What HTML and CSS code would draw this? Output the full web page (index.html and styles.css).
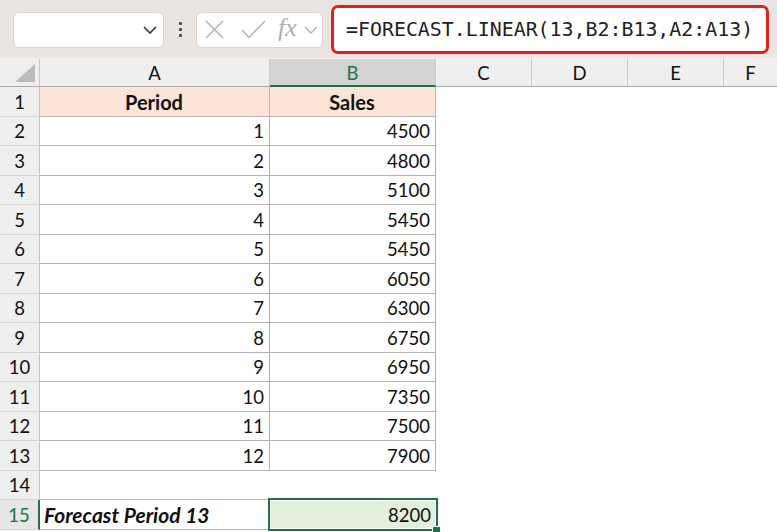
FILE: index.html
```html
<!DOCTYPE html>
<html>
<head>
<meta charset="utf-8">
<link rel="stylesheet" href="styles.css">
</head>
<body>
<div class="topbar">
  <div class="namebox">
    <svg class="nb-chev" width="14" height="8" viewBox="0 0 14 8"><path d="M1 1 L7 7 L13 1" fill="none" stroke="#333" stroke-width="1.6"/></svg>
  </div>
  <div class="dots"><span></span><span></span><span></span></div>
  <div class="iconbox">
    <svg width="19" height="19" viewBox="0 0 19 19"><path d="M1 1 L18 18 M18 1 L1 18" stroke="#b3b3b3" stroke-width="1.5" fill="none"/></svg>
    <svg width="25" height="19" viewBox="0 0 25 19"><path d="M1 10 L8 17.5 L24 1" stroke="#b3b3b3" stroke-width="1.5" fill="none"/></svg>
    <span class="fx">fx</span>
    <svg width="14" height="8" viewBox="0 0 14 8"><path d="M1 1 L7 7 L13 1" fill="none" stroke="#b3b3b3" stroke-width="1.4"/></svg>
  </div>
  <div class="formula">=FORECAST.LINEAR(13,B2:B13,A2:A13)</div>
</div>
<div class="sheet">
  <div class="corner"><svg width="20" height="18" viewBox="0 0 20 18"><path d="M20 0 L20 18 L0 18 Z" fill="#bcbcbc"/></svg></div>
  <div class="ch">A</div><div class="ch sel">B</div><div class="ch">C</div><div class="ch">D</div><div class="ch">E</div><div class="ch last">F</div>

  <div class="rh">1</div><div class="c b hd">Period</div><div class="c b hd">Sales</div><div class="c"></div><div class="c"></div><div class="c"></div><div class="c"></div>
  <div class="rh">2</div><div class="c b num">1</div><div class="c b num">4500</div><div class="c"></div><div class="c"></div><div class="c"></div><div class="c"></div>
  <div class="rh">3</div><div class="c b num">2</div><div class="c b num">4800</div><div class="c"></div><div class="c"></div><div class="c"></div><div class="c"></div>
  <div class="rh">4</div><div class="c b num">3</div><div class="c b num">5100</div><div class="c"></div><div class="c"></div><div class="c"></div><div class="c"></div>
  <div class="rh">5</div><div class="c b num">4</div><div class="c b num">5450</div><div class="c"></div><div class="c"></div><div class="c"></div><div class="c"></div>
  <div class="rh">6</div><div class="c b num">5</div><div class="c b num">5450</div><div class="c"></div><div class="c"></div><div class="c"></div><div class="c"></div>
  <div class="rh">7</div><div class="c b num">6</div><div class="c b num">6050</div><div class="c"></div><div class="c"></div><div class="c"></div><div class="c"></div>
  <div class="rh">8</div><div class="c b num">7</div><div class="c b num">6300</div><div class="c"></div><div class="c"></div><div class="c"></div><div class="c"></div>
  <div class="rh">9</div><div class="c b num">8</div><div class="c b num">6750</div><div class="c"></div><div class="c"></div><div class="c"></div><div class="c"></div>
  <div class="rh">10</div><div class="c b num">9</div><div class="c b num">6950</div><div class="c"></div><div class="c"></div><div class="c"></div><div class="c"></div>
  <div class="rh">11</div><div class="c b num">10</div><div class="c b num">7350</div><div class="c"></div><div class="c"></div><div class="c"></div><div class="c"></div>
  <div class="rh">12</div><div class="c b num">11</div><div class="c b num">7500</div><div class="c"></div><div class="c"></div><div class="c"></div><div class="c"></div>
  <div class="rh">13</div><div class="c b num">12</div><div class="c b num">7900</div><div class="c"></div><div class="c"></div><div class="c"></div><div class="c"></div>
  <div class="rh">14</div><div class="c"></div><div class="c"></div><div class="c"></div><div class="c"></div><div class="c"></div><div class="c"></div>
  <div class="rh rsel">15</div><div class="c tb label">Forecast Period 13</div><div class="c num active">8200</div><div class="c"></div><div class="c"></div><div class="c"></div><div class="c"></div>
</div>
</body>
</html>
```
FILE: styles.css
```css
* { box-sizing: border-box; }
html, body { margin: 0; padding: 0; }
body {
  width: 777px;
  height: 532px;
  overflow: hidden;
  background: #fff;
  font-family: Lato, "Noto Sans", sans-serif;
  color: #111;
}
.topbar {
  height: 59px;
  background: #ebe5e2;
  display: flex;
  align-items: center;
  padding-left: 13px;
  border-bottom: 1px solid #f4f1ef;
}
.namebox {
  width: 151px;
  height: 36px;
  margin-top: 1px;
  background: #fff;
  border: 1px solid #dcd6d3;
  border-radius: 6px;
  display: flex;
  align-items: center;
  justify-content: flex-end;
  padding-right: 6px;
}
.dots {
  width: 32px;
  display: flex;
  flex-direction: column;
  align-items: center;
  gap: 3px;
  margin-top: 1px;
}
.dots span {
  width: 3px;
  height: 3px;
  background: #4a4a4a;
  border-radius: 1px;
}
.iconbox {
  width: 127px;
  height: 36px;
  margin-top: 1px;
  background: #fff;
  border: 1px solid #dcd6d3;
  border-radius: 6px;
  display: flex;
  align-items: center;
  padding-left: 8px;
}
.iconbox svg:nth-child(1) { margin-right: 17px; }
.iconbox svg:nth-child(2) { margin-right: 12px; }
.fx {
  font-family: "Liberation Serif", "DejaVu Serif", serif;
  font-style: italic;
  font-size: 26px;
  color: #b0b0b0;
  margin-right: 7px;
  margin-top: -4px;
}
.formula {
  margin-left: 8px;
  width: 438px;
  height: 49px;
  border: 3px solid #e0201f;
  border-radius: 7px;
  background: #fff;
  display: flex;
  align-items: center;
  padding-left: 12px;
  font-family: "DejaVu Sans Mono", "Liberation Mono", monospace;
  font-size: 19.9px;
  color: #222;
}
.sheet {
  display: grid;
  grid-template-columns: 40px 230px 166px 96px 96px 96px 53px;
  grid-template-rows: 28px repeat(15, 29.5px);
}
.corner {
  background: #efefef;
  border-right: 1px solid #c8c8c8;
  border-bottom: 1px solid #ababab;
  display: flex;
  align-items: flex-end;
  justify-content: flex-end;
  padding: 0 4px 4px 0;
}
.ch {
  background: #efefef;
  border-right: 1px solid #cbcbcb;
  border-bottom: 1px solid #ababab;
  display: flex;
  align-items: center;
  justify-content: center;
  font-size: 18.5px;
  color: #111;
  padding-top: 1px;
}
.ch.last { border-right: none; }
.ch.sel {
  background: #d3d3d3;
  color: #217346;
  border-bottom: 2px solid #217346;
}
.rh {
  background: #efefef;
  border-right: 1px solid #c3c3c3;
  border-bottom: 1px solid #d6d6d6;
  display: flex;
  align-items: center;
  justify-content: center;
  font-size: 18.5px;
  color: #111;
  padding-top: 1px;
}
.rh.rsel {
  color: #217346;
  background: #e6e6e6;
  border-right: 2px solid #217346;
}
.c {
  display: flex;
  align-items: center;
  font-size: 18.5px;
  padding: 1px 5px 0 4px;
  white-space: nowrap;
}
.b {
  border-right: 1px solid #b4b4b4;
  border-bottom: 1px solid #b4b4b4;
}
.hd {
  background: #fce4d6;
  font-weight: 700;
  font-size: 20px;
  justify-content: center;
}
.num { justify-content: flex-end; }
.tb {
  border-top: 1px solid #b4b4b4;
  border-bottom: 1px solid #b4b4b4;
  margin-top: -1px;
}
.label {
  font-weight: 700;
  font-style: italic;
  font-size: 21px;
}
.active {
  position: relative;
  background: #e2efda;
}
.active::before {
  content: "";
  position: absolute;
  left: -2px;
  top: -2px;
  right: -2px;
  bottom: -1px;
  border: 2px solid #217346;
  box-shadow: inset 0 0 0 1px #fff;
}
.active::after {
  content: "";
  position: absolute;
  right: -5px;
  bottom: -5px;
  width: 7px;
  height: 7px;
  background: #217346;
  border: 1px solid #fff;
}
```
